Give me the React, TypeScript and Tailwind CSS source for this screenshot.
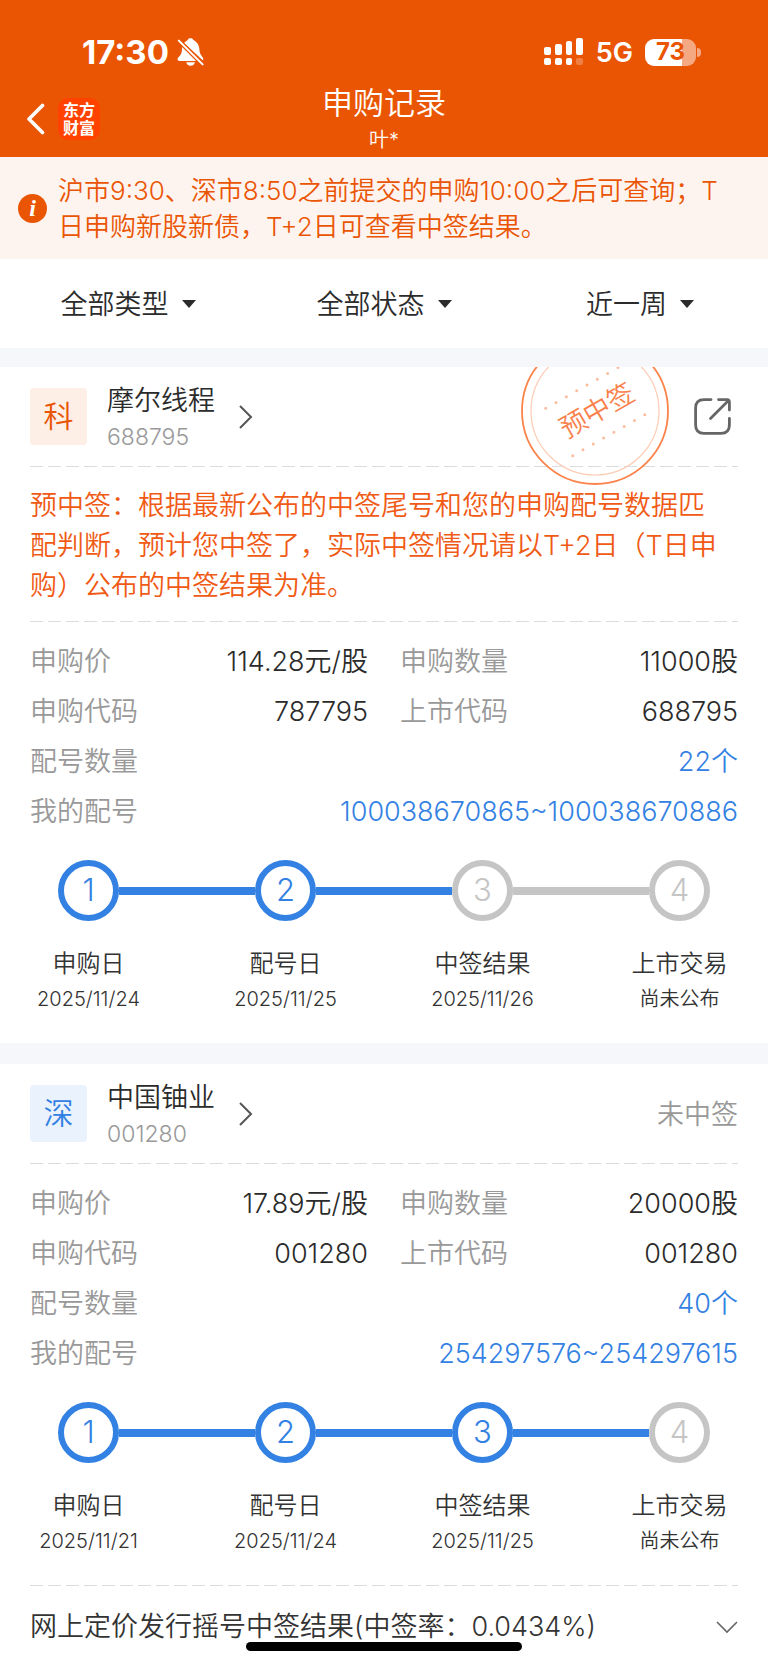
import React from 'react';

type Step = { label: string; date: string; done: boolean };

type RecordItem = {
  badge: string;
  badgeClass: string;
  name: string;
  code: string;
  status?: string;
  stamp?: string;
  message?: string;
  price: string;
  amount: string;
  applyCode: string;
  listCode: string;
  count: string;
  numbers: string;
  steps: Step[];
  footer?: string;
};

const filters = [
  { id: 'type', label: '类型', options: ['全部类型', '新股申购', '新债申购'] },
  { id: 'status', label: '状态', options: ['全部状态', '已中签', '未中签'] },
  { id: 'range', label: '时间', options: ['近一周', '近一月', '近一年'] },
];

const records: RecordItem[] = [
  {
    badge: '科',
    badgeClass: 'bg-[#fdeee6] text-[#ea5504]',
    name: '摩尔线程',
    code: '688795',
    stamp: '预中签',
    message:
      '预中签：根据最新公布的中签尾号和您的申购配号数据匹配判断，预计您中签了，实际中签情况请以T+2日（T日申购）公布的中签结果为准。',
    price: '114.28元/股',
    amount: '11000股',
    applyCode: '787795',
    listCode: '688795',
    count: '22个',
    numbers: '100038670865~100038670886',
    steps: [
      { label: '申购日', date: '2025/11/24', done: true },
      { label: '配号日', date: '2025/11/25', done: true },
      { label: '中签结果', date: '2025/11/26', done: false },
      { label: '上市交易', date: '尚未公布', done: false },
    ],
  },
  {
    badge: '深',
    badgeClass: 'bg-[#eaf2fd] text-[#3381e3]',
    name: '中国铀业',
    code: '001280',
    status: '未中签',
    price: '17.89元/股',
    amount: '20000股',
    applyCode: '001280',
    listCode: '001280',
    count: '40个',
    numbers: '254297576~254297615',
    steps: [
      { label: '申购日', date: '2025/11/21', done: true },
      { label: '配号日', date: '2025/11/24', done: true },
      { label: '中签结果', date: '2025/11/25', done: true },
      { label: '上市交易', date: '尚未公布', done: false },
    ],
    footer: '网上定价发行摇号中签结果(中签率：0.0434%)',
  },
];

const StatusBar = () => (
  <div className="flex items-center justify-between pt-8 pl-[82px] pr-[67px]">
    <div className="flex items-center gap-2">
      <span className="text-[33px] leading-10 font-bold">17:30</span>
      <svg width="27" height="28" viewBox="0 0 27 28" fill="currentColor" aria-hidden="true">
        <path d="M7 5C9 3 10.4 2.3 11 1.4C12 0 15 0 16 1.4C17 2.7 21.8 4.2 22.3 10.6C22.6 15.6 23.8 17 25.8 19.4C26.3 20 26.4 21.2 26 22.6Z" />
        <path d="M5.2 7L21 23H2.4C.4 23 0 21 1.2 19.6C3.6 17.2 4.9 15.6 5.1 10.6Z" />
        <path d="M9.2 24.2H18C17.3 26.6 15.7 27.8 13.6 27.8S9.9 26.6 9.2 24.2Z" />
        <path d="M1.6 2.4L26 26.8" stroke="#ea5504" strokeWidth="4.4" />
        <path d="M1.8 2.6L25.6 26.4" stroke="currentColor" strokeWidth="2" strokeLinecap="round" />
      </svg>
    </div>
    <div className="flex items-center">
      <svg width="40" height="28" viewBox="0 0 40 28" fill="currentColor" aria-hidden="true">
        <rect x="0" y="9" width="7" height="8" rx="2" />
        <rect x="11" y="6" width="7" height="11" rx="2" />
        <rect x="22" y="3" width="6" height="14" rx="2" />
        <rect x="32" y="0" width="7" height="17" rx="2" />
        <rect x="0" y="20" width="7" height="7" rx="2" />
        <rect x="11" y="20" width="7" height="7" rx="2" />
        <rect x="22" y="20" width="6" height="7" rx="2" />
        <rect x="32" y="20" width="7" height="7" rx="2" opacity="0.25" />
      </svg>
      <span className="ml-3 pt-[2px] text-[27px] leading-8 font-semibold">5G</span>
      <div className="ml-3 flex items-center gap-px">
        <div className="flex h-[27px] w-[51px] items-center justify-center rounded-[9px] bg-linear-to-r from-white from-73% to-[#f5a982] to-73% text-2xl font-bold text-[#ea5504]">
          73
        </div>
        <div className="h-[9px] w-1 rounded-r-full bg-[#f5a982]" />
      </div>
    </div>
  </div>
);

const NavBar = () => (
  <div className="grid grid-cols-[1fr_auto_1fr]">
    <div className="flex items-center gap-[13px] pt-2 pl-[26px]">
      <button type="button" aria-label="返回">
        <svg width="19" height="32" viewBox="0 0 19 32" fill="none" stroke="currentColor" strokeWidth="3.6" strokeLinecap="round" strokeLinejoin="round">
          <path d="M16.5 2.5L3 16L16.5 29.5" />
        </svg>
      </button>
      <div className="flex h-[42px] w-[42px] items-center justify-center rounded-[10px] bg-[#ff4200] text-center text-base leading-[18px] font-bold">
        东方
        <br />
        财富
      </div>
    </div>
    <div className="pt-[9px] text-center">
      <h1 className="text-[31px] leading-[43px]">申购记录</h1>
      <p className="text-xl leading-[33px]">叶*</p>
    </div>
    <div />
  </div>
);

const Divider = () => (
  <div className="h-px bg-[repeating-linear-gradient(to_right,#dcdcdc_0px,#dcdcdc_13px,transparent_13px,transparent_18px)]" />
);

const Stamp = ({ text }: { text: string }) => (
  <svg className="absolute -top-[31px] right-[98px]" width="150" height="150" viewBox="-75 -75 150 150" fill="none">
    <circle r="73" stroke="#fb844b" strokeWidth="1.8" />
    <circle r="64" stroke="#fdccb4" strokeWidth="1.2" />
    <path d="M-49.3 -2.7L24 -44" stroke="#fbbd9d" strokeWidth="3" strokeLinecap="round" strokeDasharray="0 11.85" />
    <path d="M-22.3 44.7L51 3" stroke="#fbbd9d" strokeWidth="3" strokeLinecap="round" strokeDasharray="0 11.85" />
    <text transform="rotate(-30)" x="2" y="10" textAnchor="middle" fill="#f9804a" className="text-[27px]">
      {text}
    </text>
  </svg>
);

const DetailRow = ({ label, value, blue }: { label: string; value: string; blue?: boolean }) => (
  <div className="flex justify-between leading-[50px]">
    <dt className="text-[#999]">{label}</dt>
    <dd className={blue ? 'text-[#3381e3]' : 'text-[#2b2b2b]'}>{value}</dd>
  </div>
);

const Steps = ({ steps }: { steps: Step[] }) => (
  <div className="pt-[23px] pb-[27px]">
    <div className="flex items-center px-7">
      {steps.map((step, i) => (
        <React.Fragment key={step.label}>
          {i > 0 && <div className={`h-2 flex-1 ${steps[i - 1].done ? 'bg-[#3381e3]' : 'bg-[#c5c5c5]'}`} />}
          <div
            className={`flex h-[61px] w-[61px] items-center justify-center rounded-full border-6 text-[31px] font-light ${
              step.done ? 'border-[#3381e3] text-[#3381e3]' : 'border-[#c5c5c5] text-[#c5c5c5]'
            }`}
          >
            {i + 1}
          </div>
        </React.Fragment>
      ))}
    </div>
    <ol className="flex justify-between pt-[25px] text-center text-[#333]">
      {steps.map((step) => (
        <li key={step.label} className="w-[117px]">
          <p className="text-2xl leading-9">{step.label}</p>
          <p className="text-xl leading-[34px]">{step.date}</p>
        </li>
      ))}
    </ol>
  </div>
);

const RecordCard = ({ item }: { item: RecordItem }) => (
  <section className="relative overflow-hidden bg-white px-[30px]">
    <div className="flex h-[99px] items-center justify-between">
      <a href="#" className="flex items-center">
        <span className={`flex h-[57px] w-[57px] items-center justify-center rounded text-[30px] ${item.badgeClass}`}>
          {item.badge}
        </span>
        <span className="ml-5 flex flex-col pt-1">
          <span className="leading-9 text-[#2b2b2b]">{item.name}</span>
          <span className="text-[23px] leading-9 text-[#999]">{item.code}</span>
        </span>
        <svg className="ml-6" width="14" height="24" viewBox="0 0 14 24" fill="none" stroke="#555" strokeWidth="2">
          <path d="M1 1L12 12L1 23" />
        </svg>
      </a>
      {item.status && <span className="pt-1 text-[#999]">{item.status}</span>}
      {item.stamp && (
        <button type="button" aria-label="分享" className="mr-[7px]">
          <svg width="37" height="37" viewBox="0 0 37 37" fill="none" stroke="#666" strokeWidth="2.8" strokeLinecap="round">
            <path d="M17 1.6H10Q1.6 1.6 1.6 10V27Q1.6 35.4 10 35.4H27Q35.4 35.4 35.4 27V20.5" />
            <path d="M24.5 1.6H33Q35.4 1.6 35.4 4V12" />
            <path d="M34 3L16.5 20.5" />
          </svg>
        </button>
      )}
    </div>
    {item.stamp && <Stamp text={item.stamp} />}
    <Divider />
    {item.message && (
      <>
        <p className="pt-[19px] pr-2 pb-[15px] leading-10 text-[#f05a14]">{item.message}</p>
        <Divider />
      </>
    )}
    <dl className="pt-[15px]">
      <div className="grid grid-cols-2 gap-x-8">
        <DetailRow label="申购价" value={item.price} />
        <DetailRow label="申购数量" value={item.amount} />
        <DetailRow label="申购代码" value={item.applyCode} />
        <DetailRow label="上市代码" value={item.listCode} />
      </div>
      <DetailRow label="配号数量" value={item.count} blue />
      <DetailRow label="我的配号" value={item.numbers} blue />
    </dl>
    <Steps steps={item.steps} />
    {item.footer && (
      <>
        <Divider />
        <button type="button" className="flex h-[79px] w-full items-center justify-between pt-1 text-left text-[#333]">
          {item.footer}
          <svg width="22" height="13" viewBox="0 0 22 13" fill="none" stroke="#666" strokeWidth="1.6">
            <path d="M1 1L11 11L21 1" />
          </svg>
        </button>
      </>
    )}
  </section>
);

const App = () => {
  return (
    <div
      lang="zh-CN"
      className="min-h-screen bg-white font-['Inter','Noto_Sans_CJK_SC',sans-serif] text-[27px] font-[350]"
    >
      <header className="bg-[#ea5504] text-white">
        <StatusBar />
        <NavBar />
      </header>

      {/* Notice */}
      <div className="flex items-center gap-[11px] bg-[#fef4ef] py-[14px] pr-[30px] pl-[18px] text-[#ea5504]">
        <span className="flex h-[29px] w-[29px] shrink-0 items-center justify-center rounded-full bg-[#ea5504] font-['Liberation_Serif',serif] text-2xl leading-none font-bold text-white italic">
          i
        </span>
        <p className="pt-[2px] text-[26px] leading-9">
          沪市9:30、深市8:50之前提交的申购10:00之后可查询；T日申购新股新债，T+2日可查看中签结果。
        </p>
      </div>

      {/* Filters */}
      <div className="grid h-[89px] grid-cols-3">
        {filters.map((filter) => (
          <label key={filter.id} className="flex items-center justify-center gap-[13px] text-[#2b2b2b]">
            <select aria-label={filter.label} className="appearance-none bg-transparent pt-1">
              {filter.options.map((option) => (
                <option key={option}>{option}</option>
              ))}
            </select>
            <svg width="14" height="8" viewBox="0 0 14 8" fill="currentColor" aria-hidden="true">
              <path d="M0 0H14L7 8Z" />
            </svg>
          </label>
        ))}
      </div>

      {/* Records */}
      <main className="flex flex-col gap-[21px] bg-[#f6f7fa] pt-[19px]">
        {records.map((item) => (
          <RecordCard key={item.code} item={item} />
        ))}
      </main>

      {/* Home indicator */}
      <div className="fixed inset-x-0 bottom-[14px] mx-auto h-[9px] w-[276px] rounded-full bg-black" />
    </div>
  );
};

export default App;
